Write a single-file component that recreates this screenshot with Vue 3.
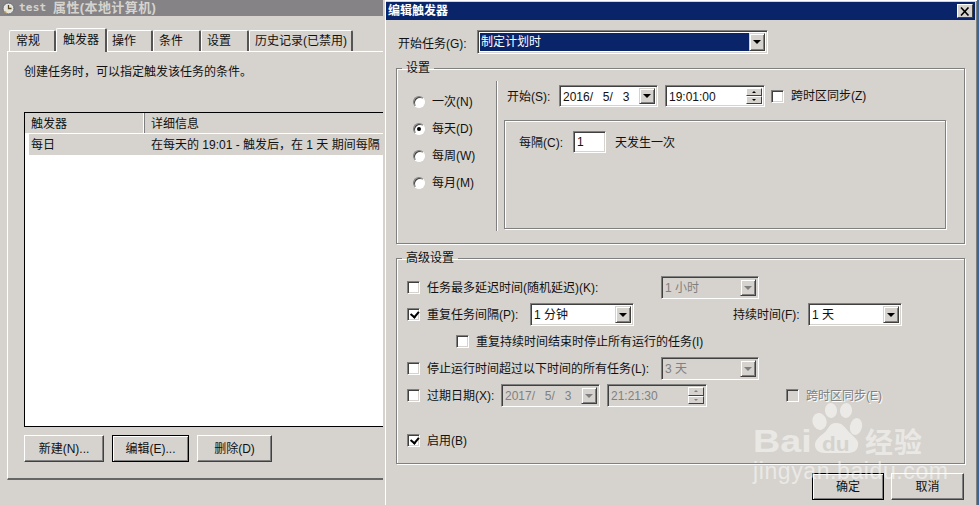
<script setup>
const radios = [
  { t: '一次(N)', on: false },
  { t: '每天(D)', on: true },
  { t: '每周(W)', on: false },
  { t: '每月(M)', on: false }
]
const tabs = ['常规', '触发器', '操作', '条件', '设置', '历史记录(已禁用)']
</script>

<template>
  <div class="page">
    <section class="left">
      <header class="ltitle">
        <svg class="clock" width="13" height="13" viewBox="0 0 13 13">
          <circle cx="6.500" cy="6.500" r="5.500" fill="#e6e4de" stroke="#5e6a78" />
          <path d="M6.500 3v3.500h3" fill="none" stroke="#5a4a20" stroke-width="1.300" />
          <path d="M2 10l2-1 1 3z" fill="#c8a43c" />
        </svg>
        <span class="ltest">test</span>
        <span class="lname">属性(本地计算机)</span>
      </header>
      <nav class="tabs">
        <div v-for="(t, i) in tabs" :key="t" class="tab" :class="['t' + i, { active: i === 1 }]">{{ t }}</div>
      </nav>
      <div class="pane">
        <p class="hint">创建任务时，可以指定触发该任务的条件。</p>
        <div class="list">
          <div class="lhead">
            <div class="hc c1">触发器</div>
            <div class="hc c2">详细信息</div>
          </div>
          <div class="lrow">
            <span class="rc1">每日</span>
            <span class="rc2">在每天的 19:01 - 触发后，在 1 天 期间每隔</span>
          </div>
        </div>
        <div class="lbtns">
          <button class="btn b1">新建(N)...</button>
          <button class="btn b2 def">编辑(E)...</button>
          <button class="btn b3">删除(D)</button>
        </div>
      </div>
    </section>

    <section class="dlg">
      <header class="dtitle">
        <span>编辑触发器</span>
        <span class="xbtn">
          <svg width="10" height="9" viewBox="0 0 10 9"><path d="M1 0.500l7.500 8M8.500 0.500l-7.500 8" stroke="#000" stroke-width="1.600" fill="none" /></svg>
        </span>
      </header>

      <div class="startrow">
        <label class="startlabel">开始任务(G):</label>
        <div class="field combo w291 h24">
          <div class="val sel">制定计划时</div>
          <div class="ddb"><i class="arr"></i></div>
        </div>
      </div>

      <fieldset class="grp g1">
        <legend>设置</legend>
        <div class="g1in">
          <div class="radios">
            <div v-for="r in radios" :key="r.t" class="radio">
              <span class="rdot" :class="{ on: r.on }"></span>
              <span>{{ r.t }}</span>
            </div>
          </div>
          <div class="vsep"></div>
          <div class="g1r">
            <div class="srow">
              <span class="slab">开始(S):</span>
              <div class="field combo w99 h22">
                <div class="val date">2016/ 5/ 3</div>
                <div class="ddb"><i class="arr"></i></div>
              </div>
              <div class="field combo w100 h22 tm">
                <div class="val">19:01:00</div>
                <div class="spin"><span><i class="au"></i></span><span><i class="ad"></i></span></div>
              </div>
              <span class="cb sync"></span>
              <span class="synct">跨时区同步(Z)</span>
            </div>
            <div class="innerbox">
              <span class="everyl">每隔(C):</span>
              <div class="field numin">1</div>
              <span class="everyt">天发生一次</span>
            </div>
          </div>
        </div>
      </fieldset>

      <fieldset class="grp g2">
        <legend>高级设置</legend>
        <div class="arow r1">
          <span class="cb"></span>
          <span class="atext w234">任务最多延迟时间(随机延迟)(K):</span>
          <div class="field combo w98 h23 dis">
            <div class="val">1 小时</div>
            <div class="ddb"><i class="arr"></i></div>
          </div>
        </div>
        <div class="arow r2">
          <span class="cb on"></span>
          <span class="atext w103">重复任务间隔(P):</span>
          <div class="field combo w104 h23">
            <div class="val">1 分钟</div>
            <div class="ddb"><i class="arr"></i></div>
          </div>
          <span class="dur">持续时间(F):</span>
          <div class="field combo w94 h23">
            <div class="val">1 天</div>
            <div class="ddb"><i class="arr"></i></div>
          </div>
        </div>
        <div class="arow r3">
          <span class="cb"></span>
          <span class="atext">重复持续时间结束时停止所有运行的任务(I)</span>
        </div>
        <div class="arow r4">
          <span class="cb"></span>
          <span class="atext w234">停止运行时间超过以下时间的所有任务(L):</span>
          <div class="field combo w98 h23 dis">
            <div class="val">3 天</div>
            <div class="ddb"><i class="arr"></i></div>
          </div>
        </div>
        <div class="arow r5">
          <span class="cb"></span>
          <span class="atext w74">过期日期(X):</span>
          <div class="field combo w99 h23 dis">
            <div class="val date">2017/ 5/ 3</div>
            <div class="ddb"><i class="arr"></i></div>
          </div>
          <div class="field combo w100 h23 dis tm7">
            <div class="val">21:21:30</div>
            <div class="spin"><span><i class="au"></i></span><span><i class="ad"></i></span></div>
          </div>
          <span class="cb disb"></span>
          <span class="synct dist">跨时区同步(E)</span>
        </div>
        <div class="arow r6">
          <span class="cb on"></span>
          <span class="atext">启用(B)</span>
        </div>
      </fieldset>

      <footer class="dfoot">
        <button class="btn ok def">确定</button>
        <button class="btn cancel">取消</button>
      </footer>
    </section>

    <div class="wm">
      <svg class="paw" width="52" height="52" viewBox="0 0 52 52">
        <g fill="#ebeae7">
          <ellipse cx="8.500" cy="18.500" rx="7" ry="8.500" transform="rotate(-15 8.500 18.500)" />
          <ellipse cx="20" cy="7.500" rx="6" ry="7.500" transform="rotate(-6 20 7.500)" />
          <ellipse cx="35" cy="7.500" rx="6" ry="7.500" transform="rotate(6 35 7.500)" />
          <ellipse cx="45" cy="23.500" rx="6" ry="8.500" transform="rotate(12 45 23.500)" />
          <path d="M25 20c7 0 9 5 14 10c7 7 9 8 8 13c-1 5-5 7-10 7H14c-6 0-10-3-10-8c0-5 4-8 9-12c5-4 5-10 12-10z" />
        </g>
      </svg>
      <span class="wbai">Bai</span>
      <span class="wdu">du</span>
      <span class="wjy">经验</span>
      <span class="wurl">jingyan.baidu.com</span>
    </div>
  </div>
</template>

<style>
html, body { margin: 0; padding: 0; background: #d6d3ce; }
</style>

<style scoped>
* { box-sizing: border-box; }
.page {
  position: relative;
  display: flex;
  width: 979px;
  height: 505px;
  overflow: hidden;
  background: #d6d3ce;
  color: #111;
  font: 12px/14px "Liberation Sans", "Noto Sans CJK SC", sans-serif;
}
.left { flex: 0 0 383px; width: 383px; overflow: hidden; }
.ltitle {
  display: flex; align-items: center; height: 16px; padding-left: 2px;
  background: #858386; color: #d6d3ce; font-weight: 700;
}
.clock { flex: none; margin-right: 4px; }
.ltest { font: 700 11px/16px "DejaVu Sans Mono", monospace; width: 34px; letter-spacing: 0.2px; }
.lname { font-size: 13px; letter-spacing: 0.4px; }
.tabs { display: flex; align-items: flex-end; height: 35px; padding-left: 9px; }
.tab {
  height: 21px; line-height: 20px; padding-left: 6px;
  border: 1px solid #fff; border-bottom: 0; border-right: 2px solid #555;
  border-radius: 2px 2px 0 0;
}
.t0 { width: 47px; }
.t1 { width: 51px; }
.t2 { width: 46px; padding-left: 4px; }
.t3 { width: 48px; padding-left: 5px; }
.t4 { width: 48px; padding-left: 5px; }
.t5 { width: 104px; padding-left: 5px; }
.tab.active { height: 24px; line-height: 22px; position: relative; margin-bottom: -1px; z-index: 1; background: #d6d3ce; }
.pane {
  margin-left: 7px; width: 380px; height: 429px;
  border-top: 1px solid #fff; border-left: 1px solid #fff;
  border-bottom: 2px solid #666;
  padding: 13px 0 0 16px;
}
.hint { margin: 0; height: 47px; }
.list { height: 315px; width: 365px; background: #fff; border: 1px solid #000; }
.lhead { display: flex; height: 21px; background: #d6d3ce; border-bottom: 1px solid #fff; }
.hc { line-height: 22px; }
.c1 { width: 119px; padding-left: 6px; border-right: 1px solid #fff; box-shadow: 1px 0 0 #808080; }
.c2 { padding-left: 7px; }
.lrow {
  display: flex; height: 21px; margin-left: 4px; line-height: 23px;
  background: #d6d3ce; white-space: nowrap; overflow: hidden;
}
.rc1 { width: 122px; padding-left: 2px; flex: none; }
.rc2 { flex: none; }
.lbtns { display: flex; margin-top: 8px; }
.btn {
  height: 27px; padding: 0; background: #d6d3ce; color: #111;
  font: inherit; border: 1px solid; border-color: #fff #404040 #404040 #fff;
  box-shadow: inset -1px -1px 0 #808080;
}
.b1 { width: 80px; }
.b2 { width: 77px; margin-left: 8px; }
.b3 { width: 75px; margin-left: 8px; }
.btn.def { border: 1px solid #000; box-shadow: inset 1px 1px 0 #fff, inset -1px -1px 0 #808080; }

.dlg {
  flex: 0 0 596px; width: 596px; height: 505px;
  border-left: 2px solid #d6d3ce; border-right: 2px solid #3a6595;
  box-shadow: inset 1px 0 0 #fff, inset 0 1px 0 #fff, inset -1px 0 0 #808080;
  padding: 2px 2px 0 1px;
}
.dtitle {
  display: flex; align-items: center; justify-content: space-between;
  height: 18px; padding: 0 2px 0 2px;
  background: #0a246a; color: #fff; font-size: 12px; font-weight: 700;
}
.xbtn {
  display: flex; align-items: center; justify-content: center;
  width: 16px; height: 14px; background: #d6d3ce;
  border: 1px solid; border-color: #fff #404040 #404040 #fff;
}
.startrow { display: flex; align-items: center; height: 24px; margin-top: 10px; padding-left: 12px; }
.startlabel { width: 79px; padding-top: 3px; }

.field {
  background: #fff;
  border: 1px solid; border-color: #808080 #fff #fff #808080;
  box-shadow: inset 1px 1px 0 #404040, inset -1px -1px 0 #d6d3ce;
}
.combo { display: flex; padding: 2px; flex: none; }
.val { flex: 1; padding-left: 1px; line-height: 19px; white-space: nowrap; overflow: hidden; }
.val.sel { background: #0a246a; color: #fff; padding-left: 1px; }
.val.date { word-spacing: 6.500px; }
.ddb {
  width: 16px; flex: none; display: flex; align-items: center; justify-content: center;
  background: #d6d3ce; border: 1px solid; border-color: #d6d3ce #404040 #404040 #d6d3ce;
  box-shadow: inset 1px 1px 0 #fff, inset -1px -1px 0 #808080;
}
.arr { width: 0; height: 0; border: 4px solid transparent; border-top-color: #000; border-bottom: 0; }
.spin { width: 16px; flex: none; display: flex; flex-direction: column; }
.spin span {
  flex: 1; display: flex; align-items: center; justify-content: center; background: #d6d3ce;
  border: 1px solid; border-color: #fff #404040 #404040 #fff;
}
.au, .ad { width: 0; height: 0; border: 2px solid transparent; }
.au { border-bottom-color: #000; border-top: 0; }
.ad { border-top-color: #000; border-bottom: 0; }
.w291 { width: 291px; } .w99 { width: 99px; } .w98 { width: 98px; }
.w104 { width: 104px; } .w94 { width: 94px; } .w100 { width: 100px; }
.h22 { height: 22px; } .h23 { height: 23px; } .h24 { height: 24px; }
.dis { background: #d6d3ce; color: #808080; }
.dis .arr { border-top-color: #808080; }
.dis .au { border-bottom-color: #808080; }
.dis .ad { border-top-color: #808080; }

.grp {
  display: block; margin: 0; padding: 0; min-width: 0;
  border: 1px solid #808080;
  box-shadow: inset 1px 1px 0 #fff, 1px 1px 0 #fff;
}
.grp legend { margin-left: 5px; padding: 0 4px; line-height: 14px; }
.g1 { width: 569px; height: 183px; margin: 7px 0 0 10px; }
.g1in { display: flex; margin-top: 6px; }
.radios { width: 99px; padding: 7px 0 0 16px; }
.radio { display: flex; align-items: center; height: 27px; }
.rdot {
  width: 12px; height: 12px; border-radius: 50%; margin-right: 7px; background: #fff;
  border: 1px solid; border-color: #808080 #fff #fff #808080;
  box-shadow: inset 1px 1px 0 #404040;
  position: relative;
}
.rdot.on::after {
  content: ""; position: absolute; left: 3px; top: 3px; width: 4px; height: 4px; border-radius: 50%; background: #000;
}
.vsep { width: 2px; height: 150px; border-left: 1px solid #808080; border-right: 1px solid #fff; }
.g1r { padding-left: 6px; }
.srow { display: flex; align-items: center; height: 22px; margin-top: 4px; }
.slab { width: 55px; padding-left: 3px; padding-top: 1px; }
.tm { margin-left: 7px; }
.cb {
  position: relative; flex: none; width: 13px; height: 13px; background: #fff;
  border: 1px solid; border-color: #808080 #fff #fff #808080;
  box-shadow: inset 1px 1px 0 #404040, inset -1px -1px 0 #d6d3ce;
}
.cb.on::after {
  content: ""; position: absolute; left: 2px; top: 1px; width: 6px; height: 4px;
  border-left: 2px solid #000; border-bottom: 2px solid #000; transform: rotate(-50deg) translate(0, 1px);
}
.sync { margin-left: 6px; }
.synct { margin-left: 7px; white-space: nowrap; }
.innerbox {
  display: flex; align-items: center; flex-wrap: nowrap;
  width: 442px; height: 109px; margin-top: 13px; padding: 0 0 65px 14px;
  border: 1px solid #808080; box-shadow: inset 1px 1px 0 #fff, 1px 1px 0 #fff;
}
.everyl { width: 54px; padding-top: 2px; }
.numin { width: 33px; height: 22px; flex: none; line-height: 20px; padding-left: 3px; }
.everyt { margin-left: 9px; padding-top: 2px; }

.g2 { width: 569px; height: 213px; margin: 7px 0 0 10px; }
.arow { display: flex; align-items: center; height: 23px; padding-left: 10px; white-space: nowrap; }
.atext { margin-left: 7px; flex: none; }
.w234 { width: 234px; }
.w103 { width: 103px; }
.w74 { width: 74px; }
.r1 { margin-top: 11px; }
.r2 { margin-top: 4px; }
.r3 { margin-top: 6px; padding-left: 59px; height: 19px; }
.r4 { margin-top: 6px; }
.r5 { margin-top: 4px; }
.r6 { margin-top: 22px; }
.dur { margin-left: 99px; width: 75px; }
.tm7 { margin-left: 7px; }
.disb { margin-left: 79px; background: #d6d3ce; }
.dist { color: #808080; text-shadow: 1px 1px 0 #fff; }
.dfoot { display: flex; margin: 9px 0 0 426px; gap: 7px; }
.ok { width: 72px; }
.cancel { width: 73px; }

.wm { position: absolute; left: 0; top: 0; width: 979px; height: 505px; pointer-events: none; color: #e9e8e5; }
.wm span { position: absolute; white-space: nowrap; }
.paw { position: absolute; left: 811px; top: 403px; }
.wbai { left: 753px; top: 423px; font: 700 32px/36px "Liberation Sans", sans-serif; transform: scaleX(1.180); transform-origin: left; }
.wdu { left: 822px; top: 432px; font: 700 21px/24px "Liberation Sans", sans-serif; color: #d6d3ce; transform: scaleX(1.080); transform-origin: left; }
.wjy { left: 865px; top: 424px; font: 700 28px/34px "Noto Sans CJK SC", sans-serif; letter-spacing: 1px; }
.wurl { left: 753px; top: 461px; font: 23px/20px "Liberation Sans", sans-serif; letter-spacing: 0.600px; color: rgba(255, 255, 255, 0.5); }
</style>
